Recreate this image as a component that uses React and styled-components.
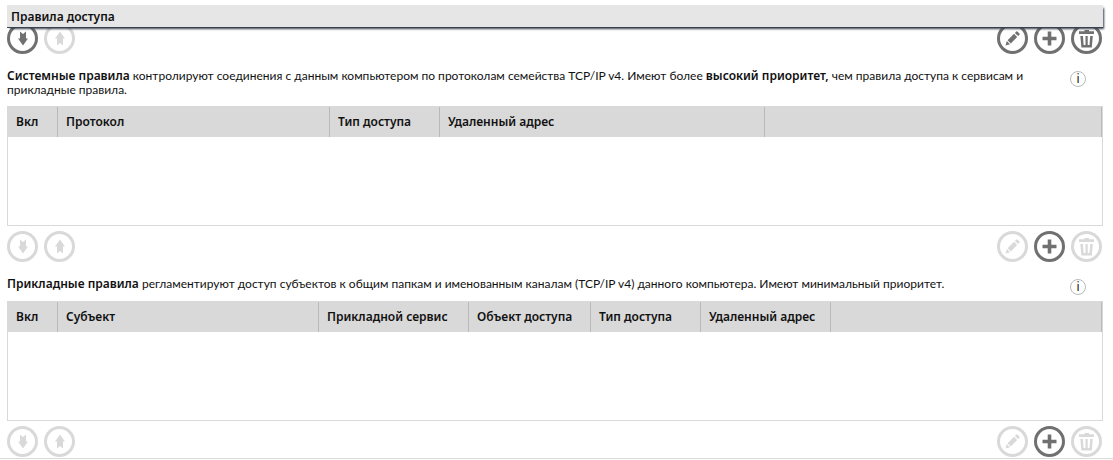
import React from "react";
import styled, { createGlobalStyle } from "styled-components";

const GlobalStyle = createGlobalStyle`
  body {
    margin: 0;
    background: #fff;
    color: #111;
    font: 12px/14px "Noto Sans", "Open Sans", sans-serif;
  }
`;

const Page = styled.main`
  padding: 5px 10px 1px 7px;
  border-bottom: 1px solid #d9d9d9;
`;

const Title = styled.h1`
  position: relative;
  z-index: 1;
  margin: 0 0 -5px;
  padding: 4px 4px 3px;
  font-size: 12px;
  line-height: 15px;
  font-weight: 600;
  background: #e6e6e6;
  border-bottom: 1px solid #3a404c;
  box-shadow: 2px 2px 2px -1px #3a404c;
`;

const Toolbar = styled.div`
  display: flex;
  gap: 6px;
  padding-right: 1px;
`;

const Spacer = styled.span`
  flex: 1;
`;

const RoundButton = styled.button`
  width: 31px;
  height: 31px;
  padding: 0;
  border: 0;
  border-radius: 50%;
  background: none;
  color: #707070;

  &:disabled {
    color: #d9d9d9;
  }

  svg {
    display: block;
  }
`;

const Section = styled.section`
  padding-top: 15px;
`;

const Intro = styled.div`
  display: flex;
  align-items: flex-start;
  justify-content: space-between;
  gap: 12px;
  min-height: 24px;
  padding-right: 17px;
`;

const Description = styled.p`
  margin: 0;
  padding-bottom: 9px;
  font-family: Lato, "Noto Sans", sans-serif;

  b {
    font-family: "Noto Sans", "Open Sans", sans-serif;
    font-weight: 600;
    line-height: 1;
  }
`;

const InfoButton = styled.button`
  flex: none;
  width: 16px;
  height: 16px;
  margin-top: 2px;
  padding: 0;
  border: 1px solid #b4bcbc;
  border-radius: 50%;
  background: #fff;
  color: #200810;
  font: inherit;
  line-height: 14px;
`;

const Grid = styled.div`
  min-height: 118px;
  margin-bottom: 5px;
  border: 1px solid #d9d9d9;
`;

const Table = styled.table`
  width: 100%;
  table-layout: fixed;
  border-collapse: separate;
  border-spacing: 0;
  background: #d9d9d9;
`;

const HeadCell = styled.th`
  width: ${(p) => (p.$width ? `${p.$width}px` : "auto")};
  height: 30px;
  box-sizing: border-box;
  padding: 0 0 0 8px;
  border-right: 1px solid #b9b9b9;
  text-align: left;
  font-weight: 600;
  white-space: nowrap;
`;

const arrow = "M13 8.500 L16 11 L19 8.500 V15.500 H21 L16 22.500 L11 15.500 H13 Z";

const icons = {
  down: <path d={arrow} />,
  up: <path d={arrow} transform="rotate(180 16 15.500)" />,
  edit: (
    <>
      <path d="M8.500 22.500 L9.800 18 L13 21.200 Z" />
      <path d="M10.600 17.200 L17 10.800 L20.200 14 L13.800 20.400 Z" />
      <path d="M17.900 9.900 L19.300 8.500 Q20 8 20.700 8.700 L22.400 10.400 Q23 11 22.500 11.700 L21.100 13.100 Z" />
    </>
  ),
  add: <path d="M13.700 8.500 H17.300 V13.700 H22.500 V17.300 H17.300 V22.500 H13.700 V17.300 H8.500 V13.700 H13.700 Z" />,
  remove: (
    <path
      fillRule="evenodd"
      d="M13.500 7 H18 V8.300 H23 V11 H8 V8.300 H13.500 Z M9.300 13 H12 L12.600 22 H14.500 V13 H16.700 V22 H18.500 L19.200 13 H21.800 L20.800 24.500 H10.400 Z"
    />
  ),
};

function Action({ icon, label, disabled }) {
  return (
    <RoundButton type="button" aria-label={label} title={label} disabled={disabled}>
      <svg width="31" height="31" viewBox="0 0 31 31" fill="currentColor" aria-hidden="true">
        <circle cx="15.500" cy="15.500" r="14" fill="none" stroke="currentColor" strokeWidth="3" />
        {icons[icon]}
      </svg>
    </RoundButton>
  );
}

function Actions({ enabled }) {
  const off = (name) => !enabled.includes(name);
  return (
    <Toolbar>
      <Action icon="down" label="Вниз" disabled={off("down")} />
      <Action icon="up" label="Вверх" disabled={off("up")} />
      <Spacer />
      <Action icon="edit" label="Изменить" disabled={off("edit")} />
      <Action icon="add" label="Добавить" disabled={off("add")} />
      <Action icon="remove" label="Удалить" disabled={off("remove")} />
    </Toolbar>
  );
}

function Rules({ columns, children }) {
  return (
    <Section>
      <Intro>
        <Description>{children}</Description>
        <InfoButton type="button">i</InfoButton>
      </Intro>
      <Grid>
        <Table>
          <thead>
            <tr>
              {columns.map(([name, width]) => (
                <HeadCell key={name} scope="col" $width={width}>
                  {name}
                </HeadCell>
              ))}
              <HeadCell as="td" />
            </tr>
          </thead>
        </Table>
      </Grid>
      <Actions enabled={["add"]} />
    </Section>
  );
}

const systemColumns = [
  ["Вкл", 50],
  ["Протокол", 272],
  ["Тип доступа", 110],
  ["Удаленный адрес", 325],
];

const applicationColumns = [
  ["Вкл", 50],
  ["Субъект", 261],
  ["Прикладной сервис", 150],
  ["Объект доступа", 122],
  ["Тип доступа", 110],
  ["Удаленный адрес", 130],
];

export default function App() {
  return (
    <>
      <GlobalStyle />
      <Page>
        <Title>Правила доступа</Title>
        <Actions enabled={["down", "edit", "add", "remove"]} />
        <Rules columns={systemColumns}>
          <b>Системные правила</b> контролируют соединения с данным компьютером по протоколам
          семейства TCP/IP v4. Имеют более <b>высокий приоритет,</b> чем правила доступа к
          сервисам и прикладные правила.
        </Rules>
        <Rules columns={applicationColumns}>
          <b>Прикладные правила</b> регламентируют доступ субъектов к общим папкам и именованным
          каналам (TCP/IP v4) данного компьютера. Имеют минимальный приоритет.
        </Rules>
      </Page>
    </>
  );
}
